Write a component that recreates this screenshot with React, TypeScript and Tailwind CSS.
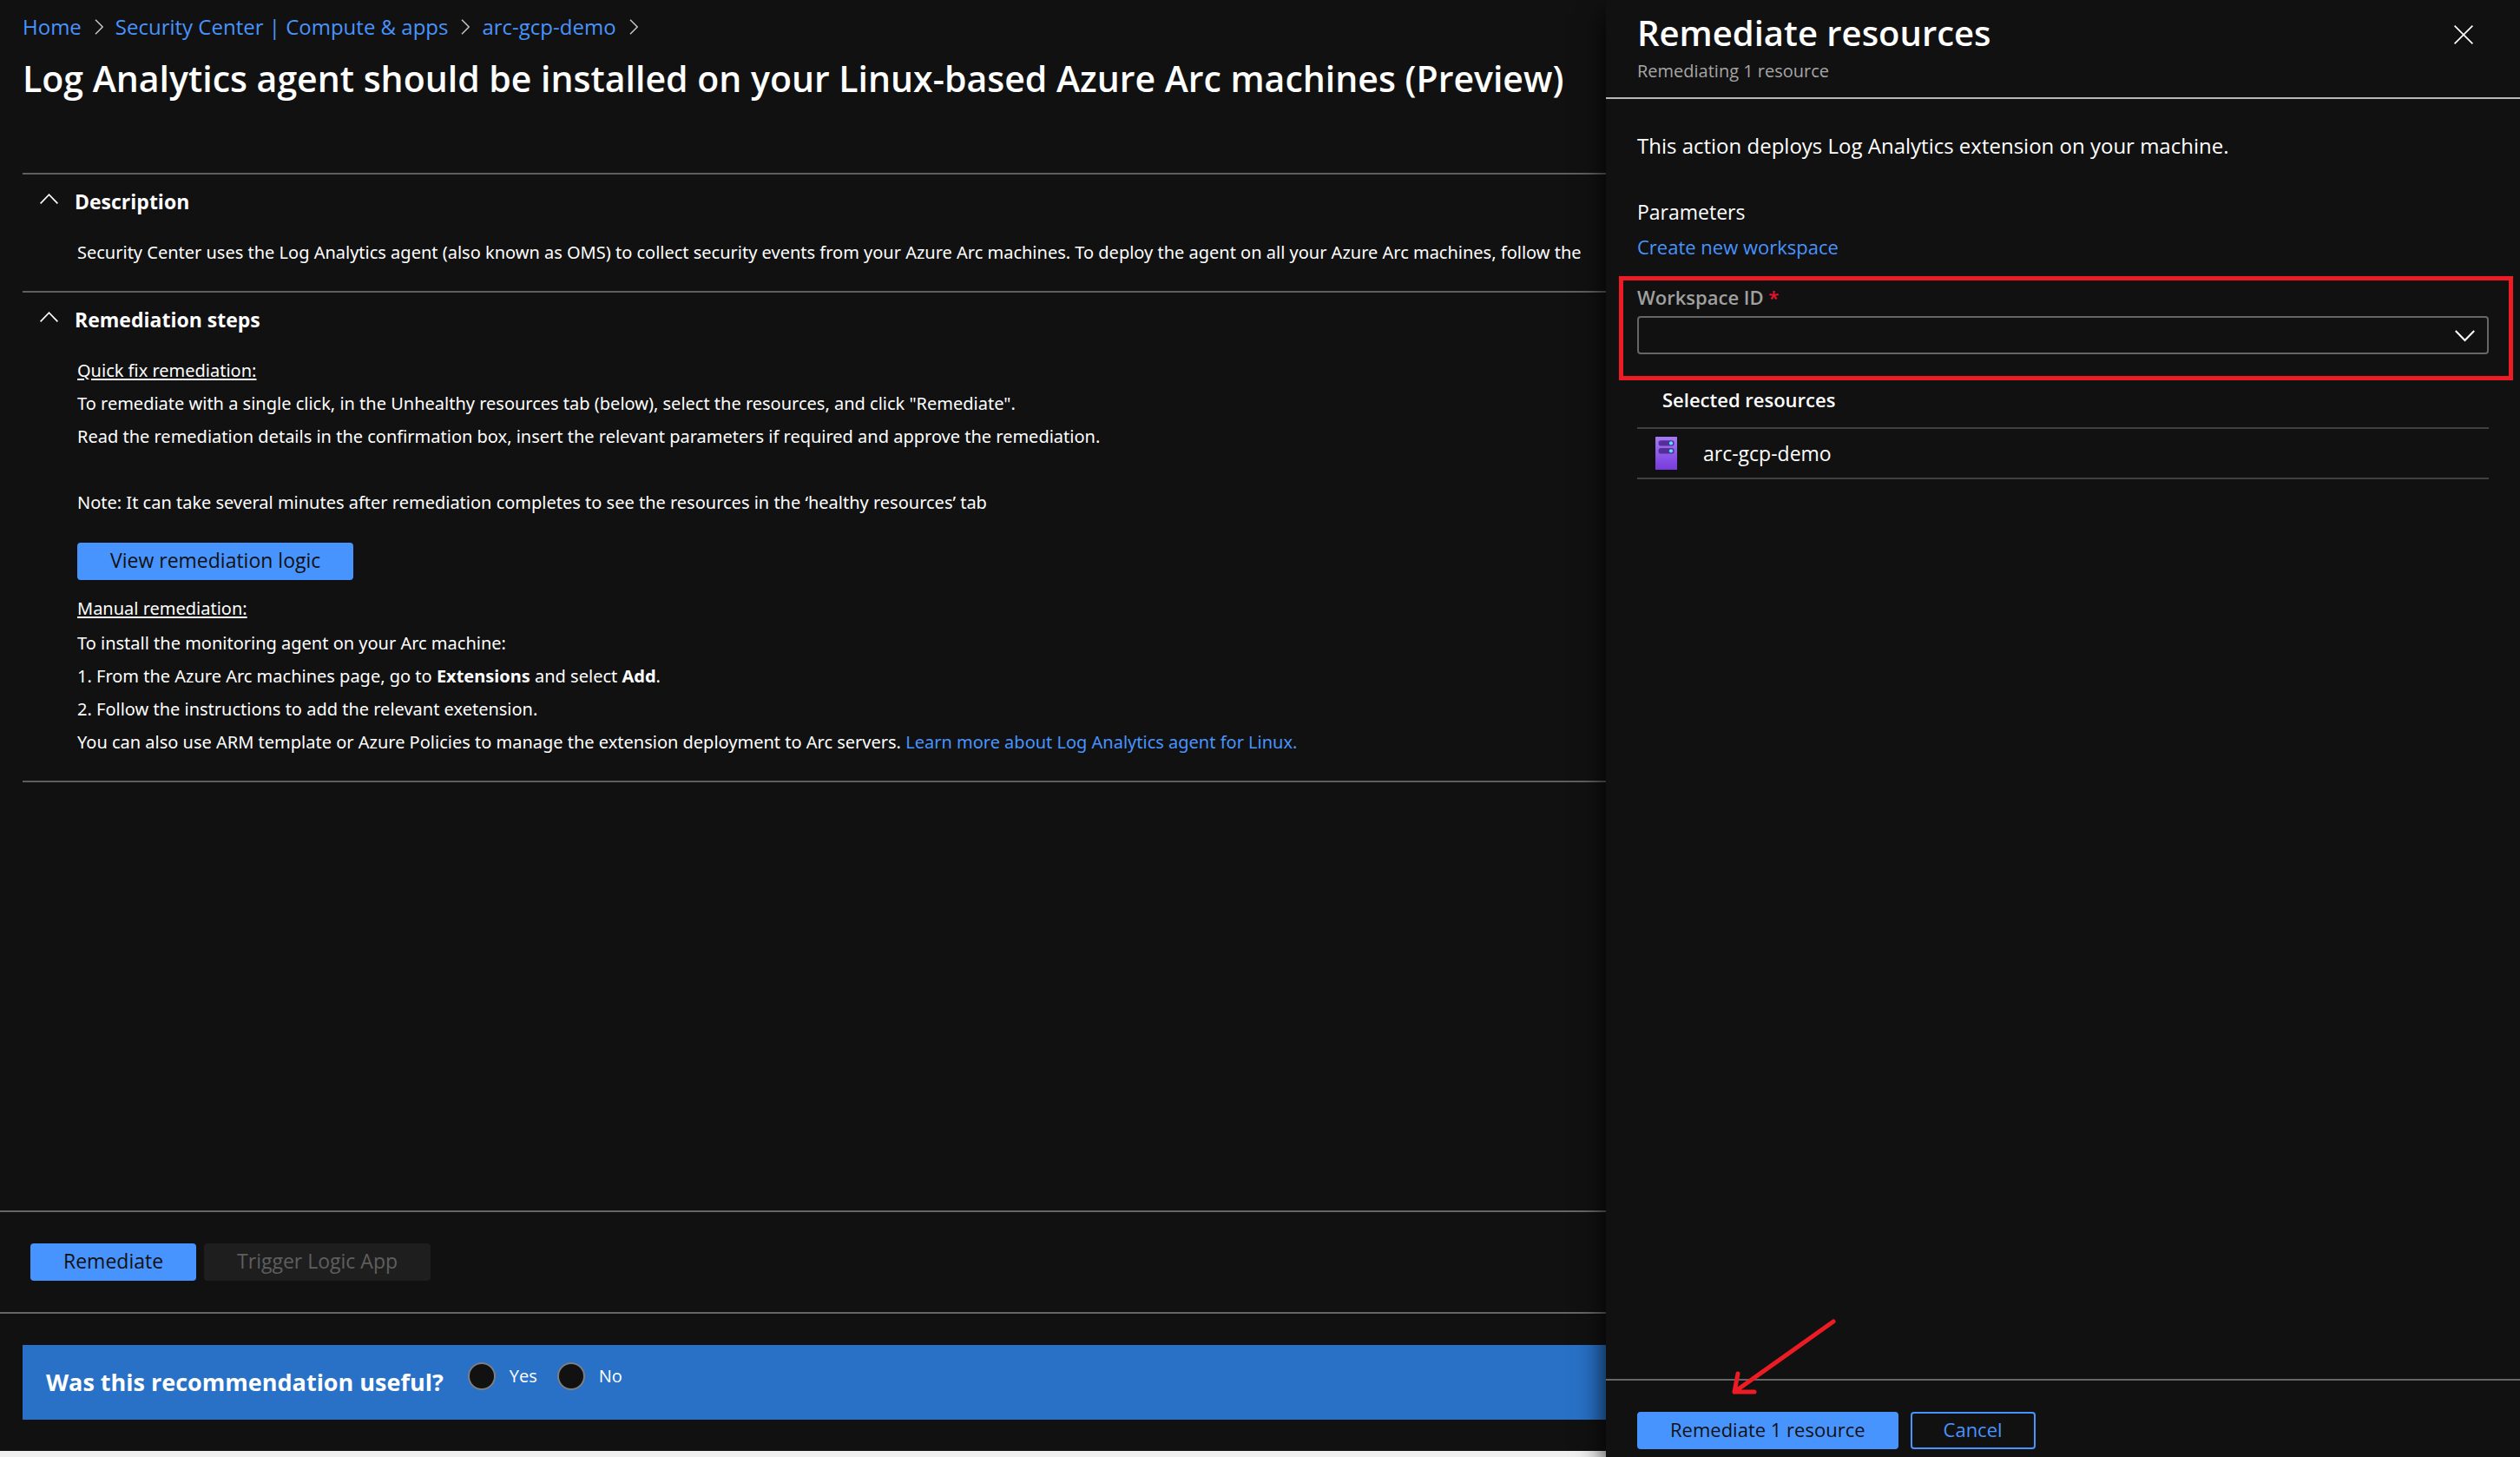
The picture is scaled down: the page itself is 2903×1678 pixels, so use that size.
import React from "react";

function CrumbChevron() {
  return (
    <svg className="h-[18px] w-[10px] shrink-0" viewBox="0 0 10 18" fill="none" stroke="#c8c6c4" strokeWidth="1.5" aria-hidden="true">
      <path d="M1 0.7 9.2 9 1 17.3" />
    </svg>
  );
}

function CollapseChevron() {
  return (
    <svg className="h-[18px] w-[21px] shrink-0" viewBox="0 0 21 18" fill="none" stroke="#ffffff" strokeWidth="1.6" aria-hidden="true">
      <path d="M0.6 11.4 10.5 1.2 20.4 11.4" />
    </svg>
  );
}

function ServerIcon() {
  return (
    <svg className="h-[38px] w-[25px] shrink-0" viewBox="0 0 25 38" aria-hidden="true">
      <defs>
        <linearGradient id="server-body" x1="0" y1="0" x2="0" y2="1">
          <stop offset="0" stopColor="#a67af4" />
          <stop offset="1" stopColor="#773adc" />
        </linearGradient>
      </defs>
      <rect width="25" height="38" rx="0.6" fill="url(#server-body)" />
      <rect x="3.6" y="4.2" width="18" height="6.4" rx="2.8" fill="#552f99" />
      <rect x="3.6" y="13.1" width="18" height="6.4" rx="2.8" fill="#552f99" />
      <circle cx="18" cy="7.4" r="2.1" fill="#50e6ff" />
      <circle cx="18" cy="16.3" r="2.1" fill="#50e6ff" />
    </svg>
  );
}

function Crumb({ label }: { label: string }) {
  return (
    <li className="flex items-center gap-[15px]">
      <a href="#" className="text-[#4894fe]">{label}</a>
      <CrumbChevron />
    </li>
  );
}

function Section({ title, children }: { title: string; children: React.ReactNode }) {
  return (
    <section className="border-t-2 border-[#5e5e5e] pt-[15px] pb-[25px]">
      <h2>
        <button type="button" aria-expanded="true" className="flex h-8 items-center gap-[19px] pl-5 text-[23px] leading-8 font-bold">
          <CollapseChevron />
          {title}
        </button>
      </h2>
      <div className="mt-6 pl-[63px] font-['Noto_Sans',sans-serif] text-[20px] leading-[38px] whitespace-nowrap">{children}</div>
    </section>
  );
}

function Choice({ label }: { label: string }) {
  return (
    <label className="flex items-center gap-4 text-[20px] leading-8">
      <input
        type="radio"
        name="useful"
        className="size-8 appearance-none rounded-full border-2 border-[#7e7e7e] bg-[#111111] checked:bg-white"
      />
      {label}
    </label>
  );
}

const primary =
  "h-[43px] rounded border-2 border-[#4894fe] bg-[#4894fe] px-9 pb-1 font-['Open_Sans',sans-serif] leading-8 text-[#111111]";

export default function App() {
  return (
    <div className="flex min-h-screen overflow-hidden bg-[#111111] font-['Open_Sans',sans-serif] text-white">
      <main className="flex min-w-0 flex-1 flex-col">
        <div className="flex-1 pl-[26px]">
          <nav aria-label="Breadcrumb" className="pt-[15px]">
            <ol className="flex h-8 items-center gap-[14px] text-[24px] leading-8">
              <Crumb label="Home" />
              <Crumb label="Security Center | Compute &amp; apps" />
              <Crumb label="arc-gcp-demo" />
            </ol>
          </nav>
          <h1 className="mt-[15px] text-[41px] leading-[56px] font-semibold whitespace-nowrap">
            Log Analytics agent should be installed on your Linux-based Azure Arc machines (Preview)
          </h1>

          <div className="mt-[81px] border-b-2 border-[#5e5e5e]">
            <Section title="Description">
              <p>
                Security Center uses the Log Analytics agent (also known as OMS) to collect security events from your Azure
                Arc machines. To deploy the agent on all your Azure Arc machines, follow the
              </p>
            </Section>
            <Section title="Remediation steps">
              <h3 className="underline underline-offset-2">Quick fix remediation:</h3>
              <p>
                To remediate with a single click, in the Unhealthy resources tab (below), select the resources, and click
                "Remediate".
              </p>
              <p>
                Read the remediation details in the confirmation box, insert the relevant parameters if required and approve
                the remediation.
              </p>
              <p className="mt-[38px]">
                Note: It can take several minutes after remediation completes to see the resources in the ‘healthy
                resources’ tab
              </p>
              <button type="button" className={`${primary} mt-[27px] block text-[23px]`}>
                View remediation logic
              </button>
              <h3 className="mt-[14px] mb-[2px] underline underline-offset-2">Manual remediation:</h3>
              <p>To install the monitoring agent on your Arc machine:</p>
              <p>
                1. From the Azure Arc machines page, go to <strong>Extensions</strong> and select <strong>Add</strong>.
              </p>
              <p>2. Follow the instructions to add the relevant exetension.</p>
              <p>
                You can also use ARM template or Azure Policies to manage the extension deployment to Arc servers.{" "}
                <a href="#" className="text-[#4894fe]">Learn more about Log Analytics agent for Linux.</a>
              </p>
            </Section>
          </div>
        </div>

        <div className="flex gap-[9px] border-y-2 border-[#666666] px-[35px] py-9 text-[23px]">
          <button type="button" className={primary}>Remediate</button>
          <button type="button" disabled className="h-[43px] rounded bg-[#1e1e1e] px-[38px] pb-1 leading-8 text-[#5e5e5e]">
            Trigger Logic App
          </button>
        </div>

        <div className="py-9 pl-[26px]">
          <fieldset className="bg-[#2871c7]">
            <div className="flex h-[86px] items-center gap-7 pl-[27px]">
              <p className="text-[27px] leading-9 font-bold">Was this recommendation useful?</p>
              <div className="flex items-center gap-[23px] pb-[14px]">
                <Choice label="Yes" />
                <Choice label="No" />
              </div>
            </div>
          </fieldset>
        </div>
        <div className="h-[7px] bg-[#f0f0f0]" />
      </main>

      <aside className="relative z-10 flex w-[1053px] shrink-0 flex-col bg-[#111111] shadow-[0_16px_30px_rgba(0,0,0,0.9)]">
        <header className="flex items-start justify-between border-b-2 border-[#b8b8b8] pt-[10px] pr-[54px] pb-4 pl-9">
          <div>
            <h2 className="text-[40px] leading-[56px] font-semibold">Remediate resources</h2>
            <p className="mt-[2px] text-[20px] leading-7 text-[#a6a6a6]">Remediating 1 resource</p>
          </div>
          <button type="button" aria-label="Close" className="mt-[19px]">
            <svg className="size-[22px]" viewBox="0 0 22 22" fill="none" stroke="#ffffff" strokeWidth="1.6" aria-hidden="true">
              <path d="M0.6 0.6 21.4 21.4M21.4 0.6 0.6 21.4" />
            </svg>
          </button>
        </header>

        <div className="flex-1 px-9 pt-[38px]">
          <p className="text-[24px] leading-8">This action deploys Log Analytics extension on your machine.</p>
          <h3 className="mt-11 text-[23px] leading-8">Parameters</h3>
          <a href="#" className="mt-2 block text-[22px] leading-8 text-[#4894fe]">Create new workspace</a>

          <div className="relative mt-[26px]">
            <label htmlFor="workspace" className="block text-[22px] leading-8 font-semibold text-[#a0a0a0]">
              Workspace ID <span className="text-[#e8112d]">*</span>
            </label>
            <div className="relative mt-[6px]">
              <select
                id="workspace"
                className="block h-11 w-full appearance-none rounded border-2 border-[#666666] bg-[#111111] px-4 text-[20px]"
              >
                <option value="" />
              </select>
              <svg
                className="pointer-events-none absolute top-4 right-4 h-[14px] w-[23px]"
                viewBox="0 0 23 14"
                fill="none"
                stroke="#ffffff"
                strokeWidth="2"
                aria-hidden="true"
              >
                <path d="M0.8 1 11.5 12 22.2 1" />
              </svg>
            </div>
            <div className="pointer-events-none absolute -top-2 -right-[28px] -bottom-[30px] -left-[21px] border-[5px] border-[#ed1c24]" />
          </div>

          <h3 className="mt-9 pl-[29px] text-[22px] leading-8 font-semibold">Selected resources</h3>
          <ul className="mt-4 border-y-2 border-[#404040]">
            <li className="flex h-14 items-center gap-[30px] pl-[21px] text-[23px] leading-8">
              <ServerIcon />
              arc-gcp-demo
            </li>
          </ul>
        </div>

        <footer className="relative flex gap-[14px] border-t-2 border-[#666666] px-9 pt-9 pb-[9px] text-[22px]">
          <button type="button" className={primary}>Remediate 1 resource</button>
          <button type="button" className="h-[43px] rounded border-2 border-[#4894fe] px-9 pb-1 leading-8 font-medium text-[#4894fe]">
            Cancel
          </button>
          <svg
            className="pointer-events-none absolute -top-[73px] left-[143px] h-[91px] w-[124px]"
            viewBox="0 0 124 91"
            fill="none"
            stroke="#ed1c24"
            strokeWidth="5"
            strokeLinecap="round"
            strokeLinejoin="round"
            aria-hidden="true"
          >
            <path d="M119 5 5 86M9 65 5 86H28" />
          </svg>
        </footer>
      </aside>
    </div>
  );
}
